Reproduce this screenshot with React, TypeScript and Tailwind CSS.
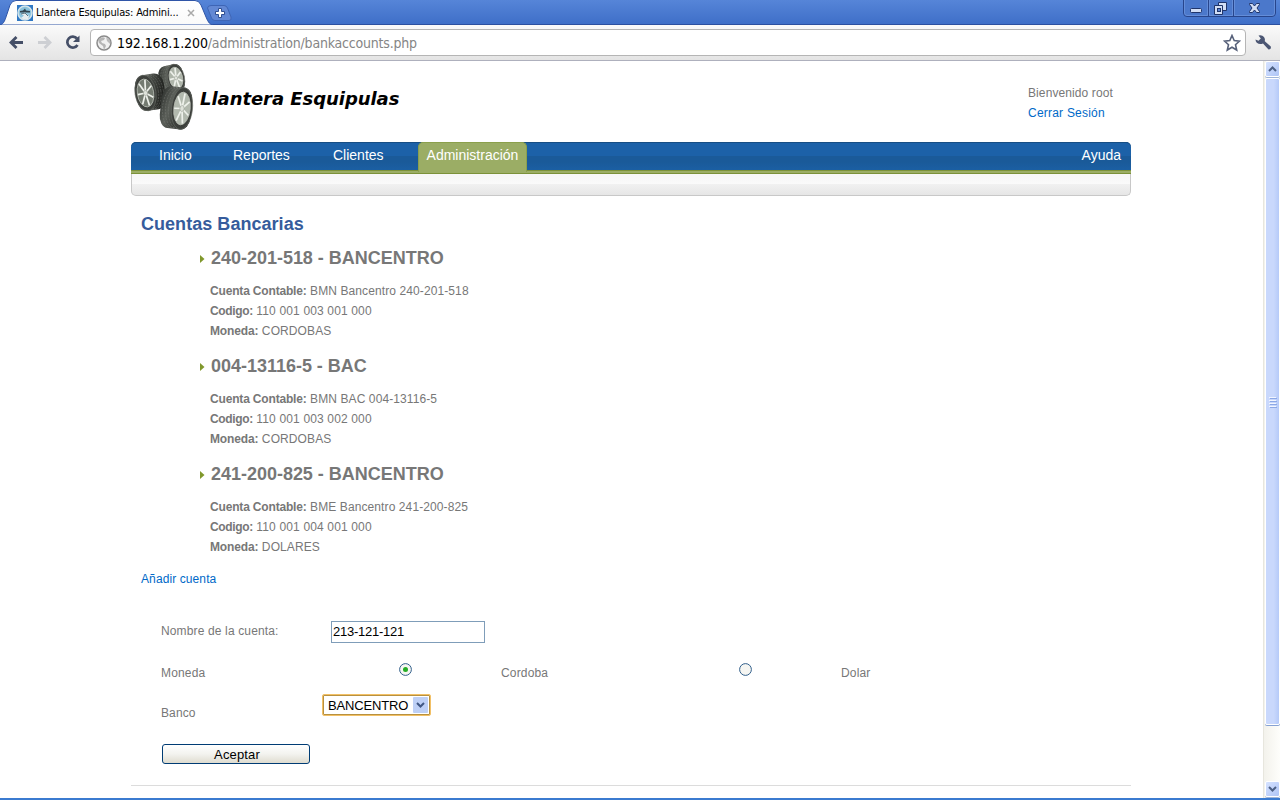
import React from 'react';

const accounts = [
  { name: '240-201-518 - BANCENTRO', ledger: 'BMN Bancentro 240-201-518', code: '110 001 003 001 000', currency: 'CORDOBAS' },
  { name: '004-13116-5 - BAC', ledger: 'BMN BAC 004-13116-5', code: '110 001 003 002 000', currency: 'CORDOBAS' },
  { name: '241-200-825 - BANCENTRO', ledger: 'BME Bancentro 241-200-825', code: '110 001 004 001 000', currency: 'DOLARES' },
];

function TabStrip() {
  return (
    <div className="flex h-[25px] shrink-0 justify-between border-b border-[#2c50a0] bg-linear-to-b from-[#5685d8] to-[#3f6fc8]">
      <div className="relative flex">
        <svg className="absolute left-0 top-0" width="236" height="25" viewBox="0 0 236 25">
          <defs>
            <linearGradient id="tab" x1="0" y1="0" x2="0" y2="1">
              <stop offset="0" stopColor="#ffffff" />
              <stop offset="1" stopColor="#fafafa" />
            </linearGradient>
          </defs>
          <path d="M0 25 C4 24 5 20 7 14 L10 5 Q12 .5 16 .5 H195 Q199 .5 201 5 L206 17 Q209 25 213 25 Z" fill="url(#tab)" stroke="#2f55a7" />
          <path d="M207.500 8 Q208 5.500 211 5.500 H224 Q226.500 5.500 227.500 8 L231 17 Q232 20.500 229 20.500 H215 Q212.500 20.500 211.500 18 Z" fill="#6388d4" stroke="#3e65b5" />
          <path d="M218.500 8.500 h3 v3 h3 v3 h-3 v3 h-3 v-3 h-3 v-3 h3z" fill="#fff" stroke="#314f91" />
        </svg>
        <div className="relative flex h-[25px] items-center pl-[17px]">
          <svg width="16" height="16" viewBox="0 0 16 16">
            <rect width="16" height="16" fill="#2f78c4" />
            <circle cx="8" cy="8" r="7" fill="#8cc3dc" stroke="#d5e4ea" strokeWidth="1.500" />
            <path d="M3 6 L6 5.500 L8 3.500 L9 5.500 L13 6 V7.500 H3Z" fill="#33454f" />
            <path d="M4 9 L8 7.500 L12 11 L11 14 Q7 15 4 13 L7 10.500Z" fill="#e9eef0" />
            <path d="M4 9 L8 8 L11 11" fill="none" stroke="#5d7480" />
          </svg>
          <span className="ml-[3px] w-[144px] whitespace-nowrap font-['DejaVu_Sans_Condensed','DejaVu_Sans',sans-serif] text-[11px] leading-4 tracking-[-0.16px] text-black [font-stretch:condensed]">Llantera Esquipulas: Admini...</span>
          <svg className="ml-[7px]" width="8" height="8" viewBox="0 0 8 8"><path d="M1 1 7 7M7 1 1 7" stroke="#a9a9a9" strokeWidth="1.500" /></svg>
        </div>
      </div>
      <svg width="97" height="18" viewBox="0 0 97 18">
        <path d="M.5 0 V13 Q.5 16.500 4 16.500 H89 Q92.500 16.500 92.500 13 V0" fill="#4b78cb" stroke="#27458c" />
        <path d="M1.500 0V13Q1.500 15.500 4 15.500H24.500V0M26.500 0V15.500H49.500V0M51.500 0V15.500H89Q91.500 15.500 91.500 13V0" fill="none" stroke="#7da2e6" opacity=".5" />
        <path d="M25.500 0V16M50.500 0V16" stroke="#27458c" />
        <rect x="7.500" y="8.500" width="11" height="4" rx="1" fill="#d2def5" stroke="#20356b" />
        <path d="M35.500 2.500h8v8h-8z" fill="#d2def5" stroke="#20356b" />
        <path d="M31.500 5.500h8v9h-8z" fill="#d2def5" stroke="#20356b" />
        <rect x="34.500" y="8.500" width="3" height="3" fill="#5b85d5" stroke="#20356b" />
        <path d="M66.500 3.500h3l2 2.500 2-2.500h3v1l-2.500 3.500 2.500 3.500v1h-3l-2-2.500-2 2.500h-3v-1l2.500-3.500-2.500-3.500z" fill="#d2def5" stroke="#20356b" />
      </svg>
    </div>
  );
}

function Toolbar() {
  return (
    <div className="flex h-9 shrink-0 items-center border-b border-[#aeb0bd] bg-linear-to-b from-[#fafafa] to-[#e4e4e4]">
      <svg className="shrink-0" width="91" height="34" viewBox="0 0 91 34">
        <path d="M23 16.500H11M16.500 11 L11 16.500 L16.500 22" fill="none" stroke="#454f67" strokeWidth="2.800" />
        <path d="M38 16.500H50M44.500 11 L50 16.500 L44.500 22" fill="none" stroke="#cdcfd3" strokeWidth="2.800" />
        <path d="M77 12.500A5.500 5.500 0 1 0 77.500 19" fill="none" stroke="#454f67" strokeWidth="2.700" />
        <path d="M79.500 9.500V16H73Z" fill="#454f67" />
      </svg>
      <div className="-ml-px flex h-[27px] w-[1156px] shrink-0 items-center rounded border border-[#b5b5b5] bg-white pl-[5px]">
        <svg width="16" height="16" viewBox="0 0 16 16">
          <circle cx="8" cy="8" r="7" fill="#f0f0f0" stroke="#8a8a8a" strokeWidth="1.500" />
          <path d="M2 5 Q6 1 9 3 L8 5 L5 6 L6 8 L9 9 L10 11 L8 15 L7 11 L3 8Z" fill="#b5b5b5" />
          <path d="M10 2 L14 5 V9 L11 6Z" fill="#b9b9b9" />
        </svg>
        <span className="ml-[5px] grow whitespace-nowrap font-['DejaVu_Sans_Condensed','DejaVu_Sans',sans-serif] text-[14px] leading-5 tracking-[-0.2px] text-[#858585] [font-stretch:condensed]">
          <span className="tracking-[-0.1px] text-black">192.168.1.200</span>/administration/bankaccounts.php
        </span>
        <svg className="mr-[4px]" width="18" height="18" viewBox="0 0 18 18"><path d="M9 1.500 11.200 6.600 16.500 7.100 12.500 10.700 13.700 16 9 13.200 4.300 16 5.500 10.700 1.500 7.100 6.800 6.600Z" fill="#fff" stroke="#57617a" strokeWidth="1.600" /></svg>
      </div>
      <svg className="ml-[9px]" width="17" height="17" viewBox="0 0 17 17">
        <path d="M3.500 1.500 Q7 .5 9 3 Q10.500 5 9.800 7.200 L15.800 12.500 Q16.500 15.300 13.500 15.500 L8 9.500 Q4.500 10.800 1.800 8.800 Q.5 7.500 .5 5.500 L3.500 6.800 L5.800 4.600Z" fill="#4b5673" />
      </svg>
    </div>
  );
}

type TireProps = { cx: number; cy: number; rx: number; ry: number; depth: number; tilt: number; spokes: string };

function Tire({ cx, cy, rx, ry, depth, tilt, spokes }: TireProps) {
  return (
    <g transform={`translate(${cx} ${cy}) rotate(${tilt})`}>
      <rect x={Math.min(0, depth) - rx * 0.9} y={-ry} width={Math.abs(depth) + rx * 1.8} height={ry * 2} rx={rx * 0.85} ry={ry * 0.6} fill="url(#tread)" />
      {[0.25, 0.5, 0.75].map((n) => (
        <ellipse key={n} cx={depth * n} cy="0" rx={rx} ry={ry * 0.97} fill="none" stroke="#868a84" strokeWidth=".6" strokeDasharray="2 1" opacity=".6" />
      ))}
      <ellipse rx={rx} ry={ry} fill="#3d403c" stroke="#6a6e68" strokeWidth=".6" />
      <ellipse rx={rx * 0.78} ry={ry * 0.78} fill={spokes} stroke="#b9beb5" strokeWidth=".8" />
      {[15, 66, 118, 169, 221, 272, 324].map((a) => (
        <line
          key={a}
          x1="0"
          y1="0"
          x2={Math.sin((a * Math.PI) / 180) * rx * 0.74}
          y2={Math.cos((a * Math.PI) / 180) * ry * 0.74}
          stroke="#eef1eb"
          strokeWidth="1.700"
        />
      ))}
      <ellipse rx={rx * 0.2} ry={ry * 0.14} fill="#dfe3db" stroke="#8d938a" strokeWidth=".5" />
    </g>
  );
}

function Tires() {
  return (
    <svg className="shrink-0" width="66" height="74" viewBox="0 0 66 74">
      <defs>
        <linearGradient id="tread" x1="0" y1="0" x2="1" y2=".35">
          <stop offset="0" stopColor="#2b2e2b" />
          <stop offset=".4" stopColor="#5b5f59" />
          <stop offset="1" stopColor="#20221f" />
        </linearGradient>
      </defs>
      <Tire cx={45} cy={17} rx={8.500} ry={14} depth={-9} tilt={-12} spokes="#aeb5aa" />
      <Tire cx={14.500} cy={32} rx={10.500} ry={18} depth={10} tilt={-9} spokes="#747b71" />
      <Tire cx={51} cy={47.500} rx={10.500} ry={21} depth={-12} tilt={6} spokes="#b2b9ae" />
    </svg>
  );
}

function Nav() {
  return (
    <div className="h-[54px]">
      <nav className="flex h-8 rounded-t-[5px] bg-[linear-gradient(#1c61a8_0_14px,#1a5a99_14px_20px,#1b5fa3_28px,#7b9138_28px_29px,#9bad65_29px_31px,#7b9138_31px_32px)] pl-[27px] text-sm leading-[26px] tracking-normal text-white shadow-[inset_0_1px_0_#174e84]">
        <span className="w-[75px] pl-px">Inicio</span>
        <span className="w-[100px]">Reportes</span>
        <span className="w-[85px]">Clientes</span>
        <span className="h-[30px] w-[109px] rounded-t-[5px] border border-b-0 border-[#8ba04c] bg-[#9bad65] text-center leading-6">Administración</span>
        <span className="ml-auto pr-[10px]">Ayuda</span>
      </nav>
      <div className="h-[22px] rounded-b-[5px] border border-t-0 border-[#c8c8c8] bg-[linear-gradient(#f6f6f6,#fafafa_10px,#f1f1f1_10px,#e6e6e6)]" />
    </div>
  );
}

function Radio({ on }: { on?: boolean }) {
  return (
    <svg width="13" height="13" viewBox="0 0 13 13">
      <circle cx="6.500" cy="6.500" r="5.900" fill="#f6f6f2" stroke="#315f8b" />
      {on && <circle cx="6.500" cy="6.500" r="2.500" fill="#25ad25" />}
    </svg>
  );
}

function Account({ item }: { item: (typeof accounts)[number] }) {
  return (
    <section className="h-[108px] pl-[69px]">
      <div className="flex h-[30px] items-center">
        <svg width="11" height="9" viewBox="0 0 11 9"><path d="M0 1V9L4.500 5Z" fill="#80982c" /></svg>
        <h2 className="text-[18px] font-bold leading-[22px] tracking-[-0.02px]">{item.name}</h2>
      </div>
      <div className="pl-[10px] pt-[8px] leading-5">
        <p><b className="tracking-[-0.17px]">Cuenta Contable:</b> {item.ledger}</p>
        <p className="tracking-[0.15px]"><b className="tracking-[-0.35px]">Codigo:</b> {item.code}</p>
        <p><b className="tracking-[-0.13px]">Moneda:</b> {item.currency}</p>
      </div>
    </section>
  );
}

function AccountForm() {
  return (
    <div className="pl-[30px]">
      <div className="mt-8 flex h-[22px] items-center">
        <span className="w-[170px] pb-[2px] tracking-[0.14px]">Nombre de la cuenta:</span>
        <span className="flex h-[22px] w-[154px] items-center border border-[#7f9db9] bg-white pl-px text-[13px] tracking-[-0.25px] text-black">213-121-121</span>
      </div>
      <div className="mt-[17px] flex h-[26px] tracking-[0.16px]">
        <span className="w-[238px] pt-[3px] leading-5">Moneda</span>
        <span className="w-[102px] pt-[3px]"><Radio on /></span>
        <span className="w-[238px] pt-[3px] leading-5">Cordoba</span>
        <span className="w-[102px] pt-[3px]"><Radio /></span>
        <span className="pt-[3px] leading-5">Dolar</span>
      </div>
      <div className="mt-[8px] flex h-[30px]">
        <span className="w-[161px] pt-[9px] leading-5">Banco</span>
        <div className="flex h-[22px] w-[109px] items-center justify-between rounded-[2px] border border-[#f2c066] bg-white pl-[5px] pr-[2px] text-[13px] tracking-[-0.15px] text-black shadow-[inset_0_0_0_1px_#b8913f]">
          <span className="pt-px">BANCENTRO</span>
          <span className="flex h-4 w-[15px] items-center justify-center rounded-[1px] bg-[#bed0f6]">
            <svg width="9" height="6" viewBox="0 0 9 6"><path d="M1 1 4.500 4.500 8 1" fill="none" stroke="#405784" strokeWidth="2" /></svg>
          </span>
        </div>
      </div>
      <button className="ml-px mt-5 flex h-5 w-[148px] items-center justify-center rounded-[3px] border border-[#003c74] bg-linear-to-b from-white via-[#f3f3ef] to-[#dfdcd0] pl-[2px] pt-px text-[13px] tracking-[0.15px] text-black">Aceptar</button>
    </div>
  );
}

function ScrollButton({ up }: { up?: boolean }) {
  return (
    <span className="flex h-4 w-[15px] shrink-0 items-center justify-center rounded-[2px] border border-white bg-linear-to-br from-[#d5e2ff] to-[#afc5f6] shadow-[0_1px_0_#a0b5d8]">
      <svg width="9" height="6" viewBox="0 0 9 6"><path d={up ? 'M1 5 4.500 1.500 8 5' : 'M1 1 4.500 4.500 8 1'} fill="none" stroke="#4d6185" strokeWidth="2" /></svg>
    </span>
  );
}

function Scrollbar() {
  return (
    <div className="flex w-[17px] shrink-0 flex-col items-center border-l border-[#e7e6de] bg-linear-to-r from-[#f3f2ec] to-[#fefefb] pb-px">
      <ScrollButton up />
      <div className="mt-px flex h-[647px] w-[15px] shrink-0 flex-col items-center justify-center gap-[2px] rounded-[2px] border border-white bg-linear-to-r from-[#c9d8fc] from-60% to-[#b5caf8] shadow-[0_1px_0_#86a1d2,1px_0_0_#98aeda]">
        {[0, 1, 2, 3].map((n) => <i key={n} className="block h-px w-[7px] bg-[#f1f5ff] shadow-[1px_1px_0_#8ca8e6]" />)}
      </div>
      <div className="grow" />
      <ScrollButton />
    </div>
  );
}

export default function App() {
  return (
    <div className="flex h-[800px] w-[1280px] flex-col overflow-hidden border-b-2 border-[#3b7bd0] bg-white font-['Liberation_Sans',Arial,sans-serif] text-xs text-[#777]">
      <TabStrip />
      <Toolbar />
      <div className="flex min-h-0 grow">
        <main className="grow pl-[131px]">
          <div className="w-[1000px] tracking-[0.1px]">
            <header className="flex h-[81px]">
              <Tires />
              <h1 className="ml-[3px] pt-[26px] font-['DejaVu_Sans',sans-serif] text-[18px] font-bold italic leading-6 tracking-[-0.05px] text-black">Llantera Esquipulas</h1>
              <div className="ml-auto w-[103px] pt-[22px] leading-5">
                <p>Bienvenido root</p>
                <a className="tracking-[0.22px] text-[#0069c8]">Cerrar Sesión</a>
              </div>
            </header>
            <Nav />
            <h1 className="ml-[10px] mt-[17px] h-[30px] text-[18px] font-bold leading-[22px] tracking-[0.04px] text-[#365c9c]">Cuentas Bancarias</h1>
            <div className="tracking-[0.1px]">{accounts.map((item) => <Account key={item.name} item={item} />)}</div>
            <a className="ml-[10px] mt-[2px] block leading-5 text-[#0069c8]">Añadir cuenta</a>
            <AccountForm />
            <div className="mt-[21px] border-t border-[#dcdcdc]" />
          </div>
        </main>
        <Scrollbar />
      </div>
    </div>
  );
}
